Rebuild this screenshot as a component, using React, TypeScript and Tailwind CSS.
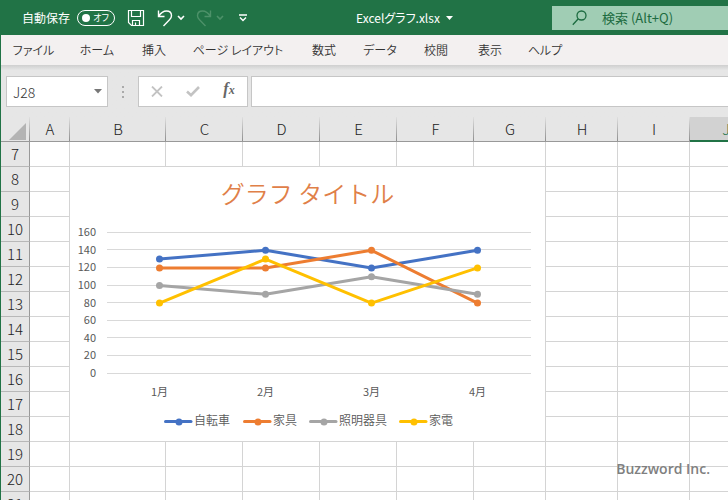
import { FC, ReactNode } from "react"

interface Tab {
  label: string
  width: string
}

interface Column {
  name: string
  width: string
}

interface Series {
  name: string
  color: string
  values: number[]
  legendX: number
}

const tabs: Tab[] = [
  { label: "ファイル", width: "w-[65px]" },
  { label: "ホーム", width: "w-[62px]" },
  { label: "挿入", width: "w-[52px]" },
  { label: "ページ レイアウト", width: "w-[116px]" },
  { label: "数式", width: "w-[56px]" },
  { label: "データ", width: "w-[56px]" },
  { label: "校閲", width: "w-[56px]" },
  { label: "表示", width: "w-[52px]" },
  { label: "ヘルプ", width: "w-[58px]" },
]

const columns: Column[] = [
  { name: "A", width: "w-[40px]" },
  { name: "B", width: "w-[96px]" },
  { name: "C", width: "w-[77px]" },
  { name: "D", width: "w-[77px]" },
  { name: "E", width: "w-[77px]" },
  { name: "F", width: "w-[77px]" },
  { name: "G", width: "w-[72px]" },
  { name: "H", width: "w-[72px]" },
  { name: "I", width: "w-[72px]" },
  { name: "J", width: "" },
]

const rows = Array.from({ length: 15 }, (_, i) => i + 7)

const months = ["1月", "2月", "3月", "4月"]
const ticks = [160, 140, 120, 100, 80, 60, 40, 20, 0]

const series: Series[] = [
  { name: "自転車", color: "#4472c4", values: [130, 140, 120, 140], legendX: 94 },
  { name: "家具", color: "#ed7d31", values: [120, 120, 140, 80], legendX: 173 },
  { name: "照明器具", color: "#a5a5a5", values: [100, 90, 110, 90], legendX: 239 },
  { name: "家電", color: "#ffc000", values: [80, 130, 80, 120], legendX: 329 },
]

// Chart scale helpers
const chartX = (index: number) => 89.5 + index * 106
const chartY = (value: number) => 207 - value * 0.88

const IconButton: FC<{ label: string; className: string; children: ReactNode }> = ({ label, className, children }) => (
  <button aria-label={label} className={`flex h-6 items-center justify-center ${className}`}>
    {children}
  </button>
)

const Chevron: FC = () => (
  <svg width="8" height="6" viewBox="0 0 8 6" fill="none" stroke="currentColor" strokeWidth="1.6">
    <path d="M1 1l3 3 3-3" />
  </svg>
)

const TitleBar: FC = () => (
  <header className="flex h-[35px] shrink-0 items-center bg-[#217346] text-[12px] text-white">
    <div className="flex w-[356px] shrink-0 items-center pl-[22px]">
      <label htmlFor="autosave" className="w-[55px]">自動保存</label>
      <span className="relative flex">
        <input
          id="autosave"
          type="checkbox"
          className="h-4 w-[38px] appearance-none rounded-full border border-white before:ml-1 before:mt-[3px] before:block before:size-2 before:rounded-full before:bg-white"
        />
        <span className="pointer-events-none absolute right-1.5 top-0 text-[9px] leading-4 [font-feature-settings:'palt']">オフ</span>
      </span>
      <IconButton label="上書き保存" className="ml-3 w-[18px]">
        <svg width="18" height="18" viewBox="0 0 18 18" fill="none" stroke="currentColor" strokeWidth="1.2">
          <path d="M1.5 1.5h15v15h-12l-3-3z" />
          <path d="M4.5 1.5v6h9v-6M5.5 16.5v-5h7v5M8.5 13.5v3" />
        </svg>
      </IconButton>
      <IconButton label="元に戻す" className="ml-3 w-4">
        <svg width="16" height="18" viewBox="0 0 16 18" fill="none" stroke="currentColor" strokeWidth="1.4">
          <path d="M1.5 1.5v6h6M1.8 7.2C4 3.5 6.5 2 9.5 2c3 0 5 2 5 4.700 0 1.700-.8 2.900-2 4.100L6.500 17" />
        </svg>
      </IconButton>
      <IconButton label="元に戻す一覧" className="ml-1 w-2">
        <Chevron />
      </IconButton>
      <IconButton label="やり直し" className="ml-[11px] w-4 text-[#4d9169]">
        <svg width="16" height="18" viewBox="0 0 16 18" fill="none" stroke="currentColor" strokeWidth="1.4">
          <path d="M14.5 1.5v6h-6M14.2 7.2C12 3.5 9.5 2 6.5 2c-3 0-5 2-5 4.700 0 1.700.8 2.900 2 4.100L9.500 17" />
        </svg>
      </IconButton>
      <IconButton label="やり直し一覧" className="ml-1 w-2 text-[#4d9169]">
        <Chevron />
      </IconButton>
      <IconButton label="クイック アクセス ツール バー" className="ml-[15px] w-2">
        <svg width="8" height="8" viewBox="0 0 8 8" fill="none" stroke="currentColor" strokeWidth="1.4">
          <path d="M0 1h8M1 3.500l3 3 3-3" />
        </svg>
      </IconButton>
    </div>
    <button className="flex w-[196px] shrink-0 items-center gap-1.5 whitespace-nowrap text-[12px] [font-feature-settings:'palt']">
      Excelグラフ.xlsx
      <svg width="7" height="4" viewBox="0 0 7 4" fill="currentColor">
        <path d="M0 0h7L3.500 4z" />
      </svg>
    </button>
    <label className="flex h-6 min-w-0 flex-1 items-center bg-[#a0cdb4] pl-5 text-[#1c6b40]">
      <svg className="shrink-0" width="15" height="16" viewBox="0 0 15 16" fill="none" stroke="currentColor" strokeWidth="1.3">
        <circle cx="9.5" cy="5.5" r="4.500" />
        <path d="M6.300 8.700L.8 14.800" />
      </svg>
      <input
        aria-label="検索"
        placeholder="検索 (Alt+Q)"
        className="ml-[15px] min-w-0 flex-1 bg-transparent text-[13px] outline-none placeholder:text-[#1c6b40]"
      />
    </label>
  </header>
)

const FormulaBar: FC = () => (
  <div className="flex h-[52px] shrink-0 bg-[#e6e6e6] bg-linear-to-b from-[#cfcfcf] to-[#e6e6e6] to-10% pl-[5px] pt-[11px]">
    <div className="flex h-[31px] w-[102px] shrink-0 items-center border border-[#c6c6c6] bg-white pl-1.5 pr-[5px]">
      <input aria-label="名前ボックス" defaultValue="J28" className="min-w-0 flex-1 pt-0.5 text-[14px] font-light text-[#333] outline-none" />
      <svg width="8" height="5" viewBox="0 0 8 5" fill="#777">
        <path d="M0 0h8L4 4.500z" />
      </svg>
    </div>
    <div className="flex h-[31px] w-[30px] shrink-0 items-center justify-center">
      <svg width="2" height="12" viewBox="0 0 2 12" fill="#aaa">
        <path d="M0 0h2v2H0zM0 5h2v2H0zM0 10h2v2H0z" />
      </svg>
    </div>
    <div className="flex h-[31px] w-[110px] shrink-0 items-center justify-around border border-[#c6c6c6] bg-white">
      <IconButton label="キャンセル" className="w-6">
        <svg width="12" height="11" viewBox="0 0 12 11" fill="none" stroke="#c3c3c3" strokeWidth="1.8">
          <path d="M1 .5l10 10M11 .5l-10 10" />
        </svg>
      </IconButton>
      <IconButton label="入力" className="w-6">
        <svg width="14" height="11" viewBox="0 0 14 11" fill="none" stroke="#c3c3c3" strokeWidth="2.6">
          <path d="M1 5.500l4 3.700L13 1" />
        </svg>
      </IconButton>
      <button aria-label="関数の挿入" className="w-6 pb-1 font-['Liberation_Serif',serif] text-[16px] font-bold italic leading-5 text-[#666]">
        f<span className="text-[12px]">x</span>
      </button>
    </div>
    <input aria-label="数式バー" className="ml-[3px] h-[31px] min-w-0 flex-1 border border-r-0 border-[#c6c6c6] bg-white px-2 text-[14px] outline-none" />
  </div>
)

const LineChart: FC = () => (
  <figure className="absolute left-[69px] top-[50px] h-[274px] w-[475px] bg-white">
    <figcaption className="absolute inset-x-0 top-2 text-center text-[24px] font-[350] leading-9 text-[#e08048]">
      グラフ タイトル
    </figcaption>
    <svg width="475" height="274" viewBox="0 0 475 274" fontSize="11" fill="#595959">
      {ticks.map((tick) => (
        <g key={tick}>
          <line x1="37" x2="461" y1={Math.floor(chartY(tick)) - 0.5} y2={Math.floor(chartY(tick)) - 0.5} stroke="#d9d9d9" />
          <text x="26" y={Math.round(chartY(tick)) + 3} textAnchor="end">{tick}</text>
        </g>
      ))}
      {months.map((month, index) => (
        <text key={month} x={chartX(index)} y="229" textAnchor="middle">{month}</text>
      ))}
      {series.map(({ name, color, values }) => (
        <g key={name} fill={color}>
          <polyline
            points={values.map((value, index) => `${chartX(index)},${chartY(value) - 0.5}`).join(" ")}
            fill="none"
            stroke={color}
            strokeWidth="3"
            strokeLinejoin="round"
          />
          {values.map((value, index) => (
            <circle key={index} cx={chartX(index)} cy={chartY(value) - 0.5} r="3.5" />
          ))}
        </g>
      ))}
      {/* Legend */}
      {series.map(({ name, color, legendX }) => (
        <g key={name}>
          <line x1={legendX + 1.5} x2={legendX + 27} y1="254.500" y2="254.500" stroke={color} strokeWidth="3" strokeLinecap="round" />
          <circle cx={legendX + 15} cy="255" r="3.5" fill={color} />
          <text x={legendX + 30} y="258" fontSize="12" fontWeight="350">{name}</text>
        </g>
      ))}
    </svg>
  </figure>
)

const Sheet: FC = () => (
  <main className="relative min-h-0 flex-1 overflow-hidden">
    <table className="w-full min-w-[761px] table-fixed border-separate border-spacing-0 text-[15px] leading-6 text-[#222]">
      <colgroup>
        <col className="w-[29px]" />
        {columns.map(({ name, width }) => (
          <col key={name} className={width} />
        ))}
      </colgroup>
      <thead>
        <tr className="h-[25px] bg-[#e6e6e6]">
          <th className="border-b border-[#999] bg-linear-to-b from-[#e0e0e0] to-[#8f8f8f] bg-[length:1px_100%] bg-right bg-no-repeat p-0">
            <svg className="ml-2 mt-1" width="17" height="17" viewBox="0 0 17 17" fill="#b4b4b4">
              <path d="M17 0v17H0z" />
            </svg>
          </th>
          {columns.map(({ name }) => (
            <th
              key={name}
              className={
                name === "J"
                  ? "border-b-2 border-[#217346] bg-[#d2d2d2] p-0 font-light leading-[22px] text-[#217346]"
                  : "border-b border-[#999] bg-linear-to-b from-[#e0e0e0] to-[#8f8f8f] bg-[length:1px_100%] bg-right bg-no-repeat p-0 font-light"
              }
            >
              {name}
            </th>
          ))}
        </tr>
      </thead>
      <tbody>
        {rows.map((row) => (
          <tr key={row}>
            <th className="h-[25px] border-b border-r border-b-[#b8b8b8] border-r-[#999] bg-[#e6e6e6] p-0 font-light">{row}</th>
            {columns.map(({ name }) => (
              <td key={name} className="border-b border-r border-[#d4d4d4] p-0" />
            ))}
          </tr>
        ))}
      </tbody>
    </table>
    <LineChart />
    <p className="absolute bottom-[21px] right-[18px] font-['Open_Sans',sans-serif] text-[14px] font-semibold leading-5 text-[#808080]">
      Buzzword Inc.
    </p>
  </main>
)

const App: FC = () => (
  <div className="flex h-screen flex-col overflow-hidden bg-white font-['Noto_Sans_CJK_JP',sans-serif]">
    <TitleBar />
    <div className="flex min-h-0 flex-1 flex-col border-l border-[#217346]">
      <nav className="flex h-[30px] shrink-0 items-center bg-[#f3f0f0] text-[12px] font-[350] text-[#333] [font-feature-settings:'palt']">
        {tabs.map(({ label, width }) => (
          <button key={label} className={`h-full shrink-0 whitespace-nowrap text-center ${width}`}>
            {label}
          </button>
        ))}
      </nav>
      <FormulaBar />
      <Sheet />
    </div>
  </div>
)

export default App
